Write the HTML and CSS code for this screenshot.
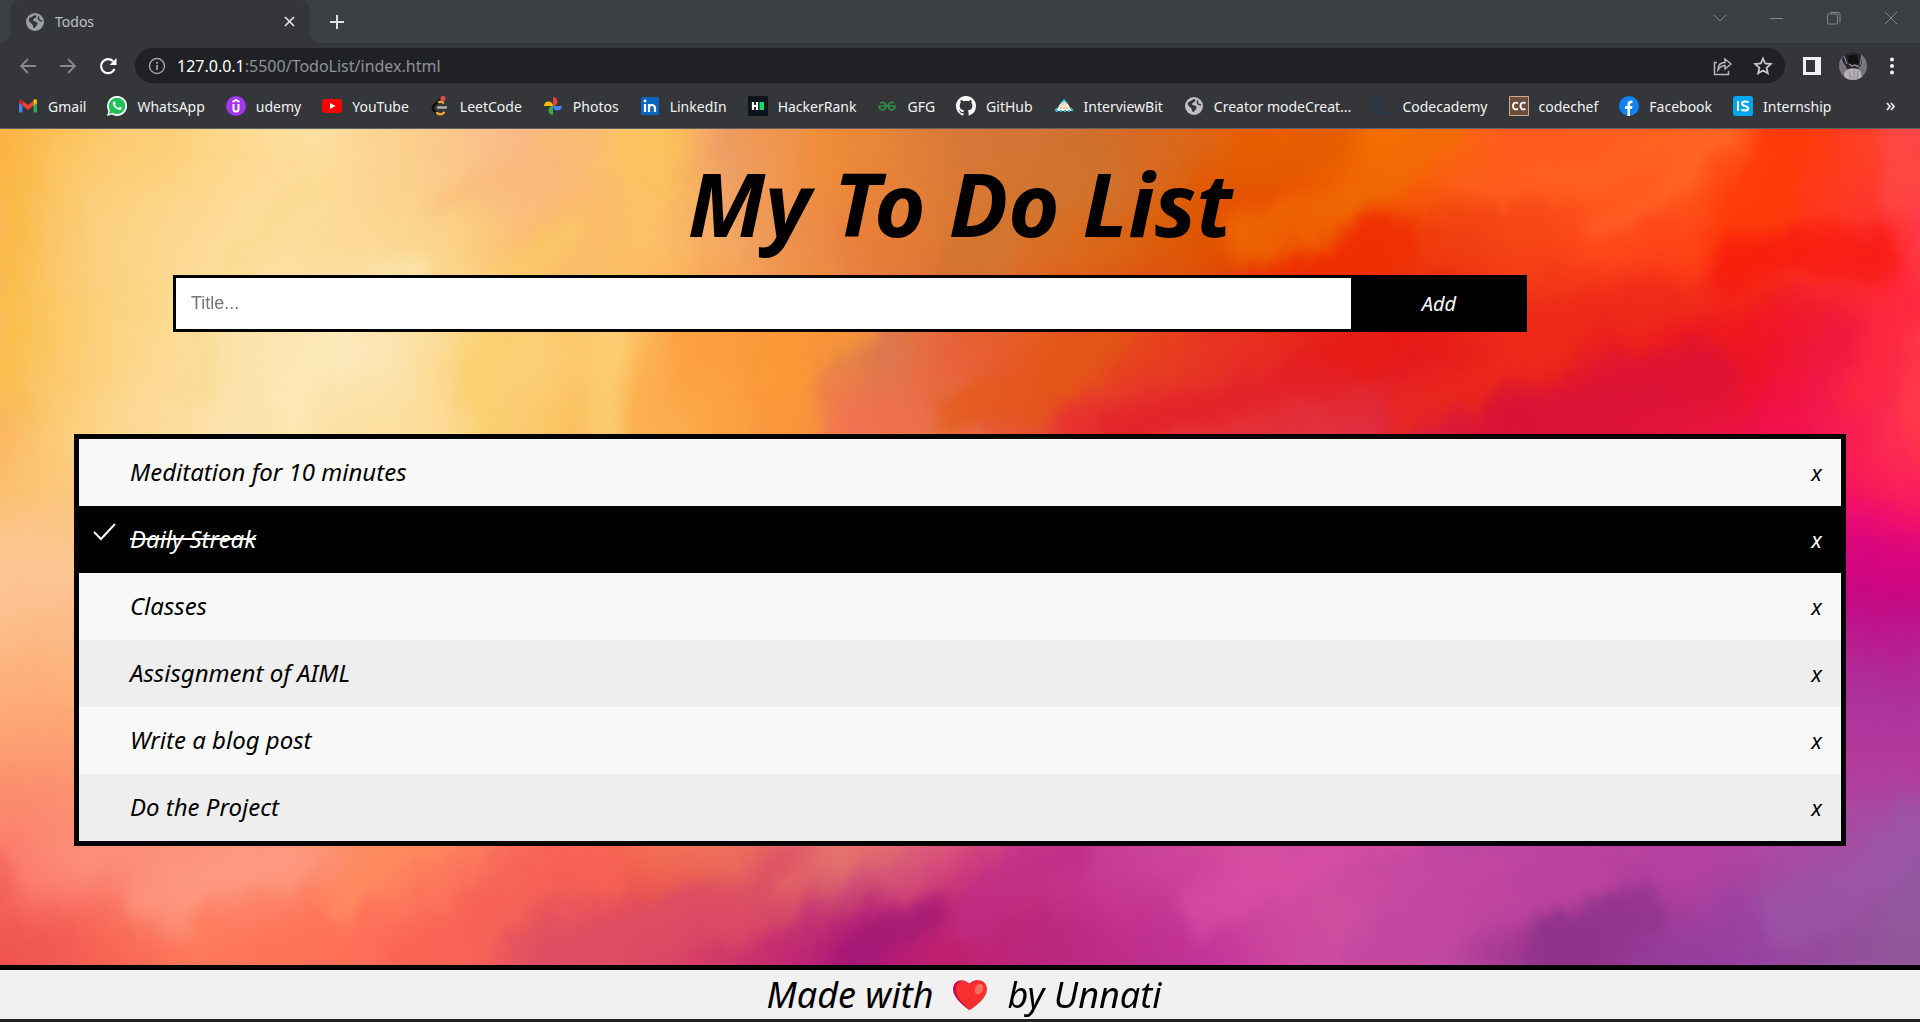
FILE: index.html
```html
<!DOCTYPE html>
<html lang="en">
<head>
<meta charset="utf-8">
<title>Todos</title>
<link rel="stylesheet" href="styles.css">
</head>
<body>
<svg class="defs" aria-hidden="true">
  <symbol id="globe" viewBox="0 0 18 18"><circle cx="9" cy="9" r="9" fill="currentColor"/><path d="M3 5.500 8 2.500c3-.8 3 1 1.500 2.200L7 6.500c-1 2 4 1.500 4.500 3.500s-1.500 3-3 5c-1.500.5-1.500-3-2.500-4S2 8.500 3 5.500Z" fill="#35363a"/><path d="M13 3.500c-1.500 2-.5 4 3 4.500" stroke="#35363a" stroke-width="1.500" fill="none"/></symbol>
</svg>
<header class="browser">
  <div class="tabstrip">
    <div class="tab">
      <svg class="favicon" aria-hidden="true"><use href="#globe"/></svg>
      <span class="tab-title">Todos</span>
      <button class="icon-btn tab-close" aria-label="Close tab"><svg width="11" height="11" viewBox="0 0 11 11"><path d="m1 1 9 9M10 1l-9 9" stroke="#dee1e6" stroke-width="1.700"/></svg></button>
    </div>
    <button class="icon-btn new-tab" aria-label="New tab"><svg width="16" height="16" viewBox="0 0 16 16"><path d="M8 1v14M1 8h14" stroke="#dee1e6" stroke-width="2"/></svg></button>
    <div class="window-controls">
      <button class="icon-btn" aria-label="Search tabs"><svg width="14" height="14" viewBox="0 0 14 14"><path d="m1 4 6 6 6-6"/></svg></button>
      <button class="icon-btn" aria-label="Minimize"><svg width="14" height="14" viewBox="0 0 14 14"><path d="M0 7.500h13"/></svg></button>
      <button class="icon-btn" aria-label="Restore"><svg width="14" height="14" viewBox="0 0 14 14"><rect x=".5" y="3" width="10" height="10" rx="1"/><path d="M3 1.500h8q2 0 2 2v8"/></svg></button>
      <button class="icon-btn" aria-label="Close"><svg width="14" height="14" viewBox="0 0 14 14"><path d="m1 1 12 12M13 1 1 13"/></svg></button>
    </div>
  </div>
  <div class="toolbar">
    <nav class="nav-buttons" aria-label="History">
      <button class="icon-btn" aria-label="Back"><svg width="20" height="20" viewBox="0 0 20 20"><path d="M18 10H3m7-7-7 7 7 7" stroke="#87898c" stroke-width="1.800" fill="none"/></svg></button>
      <button class="icon-btn" aria-label="Forward"><svg width="20" height="20" viewBox="0 0 20 20"><path d="M2 10h15m-7-7 7 7-7 7" stroke="#87898c" stroke-width="1.800" fill="none"/></svg></button>
      <button class="icon-btn" aria-label="Reload"><svg width="20" height="20" viewBox="0 0 20 20"><path d="M16.500 13A7 7 0 1 1 15 5.200" stroke="#fff" stroke-width="2.200" fill="none"/><path d="M18.500 2v7h-7z" fill="#fff"/></svg></button>
    </nav>
    <div class="omnibox">
      <svg width="18" height="18" viewBox="0 0 18 18" aria-hidden="true"><circle cx="9" cy="9" r="7.500" stroke="#9aa0a6" stroke-width="1.500" fill="none"/><path d="M9 8v5M9 5v1.800" stroke="#9aa0a6" stroke-width="1.800"/></svg>
      <span class="url" role="textbox" aria-label="Address"><span class="host">127.0.0.1</span>:5500/TodoList/index.html</span>
      <button class="icon-btn" aria-label="Share"><svg width="20" height="20" viewBox="0 0 20 20"><path d="M4 6.500H1.500v12h14V15M5 14c0-5 3-7.500 7-7.500V3l6 5-6 5V9.500c-3 0-5 1.500-7 4.500Z" stroke="#b5b7ba" stroke-width="1.500" fill="none"/></svg></button>
      <button class="icon-btn" aria-label="Bookmark this tab"><svg width="20" height="20" viewBox="0 0 20 20"><path d="m10 2.500 2.200 5 5.600.5-4.200 3.800 1.200 5.500-4.800-2.800-4.800 2.800 1.200-5.500L2.200 8l5.600-.5Z" stroke="#c6c8ca" stroke-width="1.800" fill="none"/></svg></button>
    </div>
    <div class="toolbar-end">
      <button class="icon-btn" aria-label="Side panel"><svg width="18" height="18" viewBox="0 0 18 18"><path fill="#f1f1f3" fill-rule="evenodd" d="M0 0h18v18H0zM3 3v12h9V3z"/></svg></button>
      <button class="icon-btn" aria-label="Profile"><svg width="28" height="28" viewBox="0 0 28 28"><clipPath id="av"><circle cx="14" cy="14" r="14"/></clipPath><g clip-path="url(#av)"><path fill="#77737b" d="M0 0h28v28H0z"/><path fill="#29252d" d="M4 0h18l1 14-6 4-9-1-5-6z"/><path fill="#111" d="M10 3h8l2 8-6 4-5-5z"/><path d="M2 8l5 8M5 4l3 8M23 3l-2 10M26 8l-5 8" stroke="#8a868e" stroke-width="1.200"/><path fill="#b5afb9" d="M5 21c3-5 12-7 17-1l1 8H6z"/><path d="m10 19 2 9m3-10v10m4-9-1 9" stroke="#8d8791"/><path d="m10 12 3 2 3-1 4 2" stroke="#8f8b93" stroke-width="1.500" fill="none"/></g></svg></button>
      <button class="icon-btn menu-btn" aria-label="Menu"><svg width="4" height="18" viewBox="0 0 4 18"><g fill="#f1f3f4"><circle cx="2" cy="2.500" r="2"/><circle cx="2" cy="9" r="2"/><circle cx="2" cy="15.500" r="2"/></g></svg></button>
    </div>
  </div>
  <nav class="bookmarks" aria-label="Bookmarks">
    <a href="#"><svg viewBox="0 0 20 20"><path fill="#4285f4" d="M1 6v10.500h3.500V8z"/><path fill="#34a853" d="M15.500 8v8.500H19V6z"/><path fill="#ea4335" d="m4.500 5 5.500 4 5.500-4v4.500L10 14 4.500 9.500z"/><path fill="#c5221f" d="M1 6V4.500Q2 2 4.500 4v5.500L1 7z"/><path fill="#fbbc04" d="M19 7V4.500Q18 2 15.500 4v5.500z"/></svg>Gmail</a>
    <a href="#"><svg viewBox="0 0 20 20"><path fill="#fff" d="M10 0a10 10 0 1 1-5 18.600L0 20l1.400-5A10 10 0 0 1 10 0Z"/><circle cx="10" cy="10" r="8.300" fill="#1fc157"/><path fill="#1fc157" d="m2 18 1.300-4.500 3.200 3z"/><path d="M6.500 5.500Q5 7 6.500 9.500c1.800 3 4.500 4.600 6.500 4.500q2-.5 1.800-2.200l-2.300-1-1 1.200Q9 11 8 8.800l.8-1L8 5.500z" fill="#fff"/></svg>WhatsApp</a>
    <a href="#"><svg viewBox="0 0 20 20"><circle cx="10" cy="10" r="10" fill="#a435f0"/><path d="m6.500 6 3.500-2 3.500 2M7.500 8v5q0 2.500 2.500 2.500t2.500-2.500V8" fill="none" stroke="#fff" stroke-width="2"/></svg>udemy</a>
    <a href="#"><svg viewBox="0 0 20 20"><rect y="3" width="20" height="14" rx="3.500" fill="#f00"/><path fill="#fff" d="m8 7 5.500 3L8 13z"/></svg>YouTube</a>
    <a href="#"><svg viewBox="0 0 20 20" fill="none" stroke-linecap="round" stroke-width="2.300"><path stroke="#0b0b0b" d="M11 3 3.500 10q-1.500 2 0 4L6 16.500"/><path stroke="#f5a623" d="m9 6q2-1 4 .7M7 17q4 3 7-.5"/><path stroke="#b3b1b0" d="M8 11.500h8"/><circle cx="13" cy="2.500" r="1.500" fill="#d34c4c" stroke="#d34c4c"/></svg>LeetCode</a>
    <a href="#"><svg viewBox="0 0 20 20"><path fill="#ea4335" d="M10 1a4.500 4.500 0 0 1 0 9z"/><path fill="#4285f4" d="M19 10a4.500 4.500 0 0 1-9 0z"/><path fill="#34a853" d="M10 19a4.500 4.500 0 0 1 0-9z"/><path fill="#fbbc04" d="M1 10a4.500 4.500 0 0 1 9 0z"/></svg>Photos</a>
    <a href="#"><svg viewBox="0 0 20 20"><rect x="1" y="1" width="18" height="18" rx="1.500" fill="#0a66c2"/><circle cx="5" cy="5" r="1.400" fill="#fff"/><path d="M5 8v8M9 16V8m0 4q0-3 2.800-3T15 12v4" fill="none" stroke="#fff" stroke-width="2.200"/></svg>LinkedIn</a>
    <a href="#"><svg viewBox="0 0 20 20"><path fill="#0e141e" d="M0 0h20v20H0z"/><path stroke="#fff" stroke-width="2.200" d="M5 6v8M9 6v8M5 10h4"/><path fill="#05e55e" d="M11.500 6H16v8h-4.500z"/></svg>HackerRank</a>
    <a href="#"><svg viewBox="0 0 20 20"><path d="M3 7q5-2 6 3-1 5-5 3.500Q2 12.500 2 10h16q0 2.500-2 3.500-4 1.500-5-3.500 1-5 6-3" fill="none" stroke="#2f8d46" stroke-width="1.700"/></svg>GFG</a>
    <a href="#"><svg viewBox="0 0 16 16"><path fill="#fff" d="M8 0C3.580 0 0 3.580 0 8c0 3.540 2.290 6.530 5.470 7.590.4.070.55-.17.55-.38v-1.490c-2.010.37-2.530-.49-2.690-.94-.09-.23-.48-.94-.82-1.130-.28-.15-.68-.52-.01-.53.63-.01 1.080.58 1.230.82.72 1.210 1.870.87 2.330.66.07-.52.28-.87.51-1.070-1.780-.2-3.640-.89-3.640-3.950 0-.87.31-1.590.82-2.150-.08-.2-.36-1.020.08-2.120 0 0 .67-.21 2.200.82a7.600 7.600 0 0 1 4 0c1.530-1.040 2.200-.82 2.200-.82.44 1.100.16 1.920.08 2.120.51.56.82 1.270.82 2.150 0 3.070-1.870 3.750-3.650 3.950.29.25.54.73.54 1.480v2.200c0 .21.150.46.550.38A8 8 0 0 0 16 8c0-4.420-3.580-8-8-8Z"/></svg>GitHub</a>
    <a href="#"><svg viewBox="0 0 20 20"><path fill="#f6eee2" d="m10 4 4 4 4 7H2l4-7z"/><path d="m7 7 3-3 3 3M1 15l2-3M19 15l-2-3" fill="none" stroke="#30b7d0" stroke-width="1.500"/><path d="M2 15h16" stroke="#30b7d0" stroke-width="2" stroke-dasharray="2 2"/><path d="M6 12h8M8 8h4" stroke="#e9a348" stroke-dasharray="2 1"/></svg>InterviewBit</a>
    <a href="#"><svg class="grey" viewBox="-1 -1 20 20"><use href="#globe" width="18" height="18"/></svg>Creator modeCreat...</a>
    <a href="#"><svg viewBox="0 0 20 20"><path d="M.5 2.500h11v15H.5zM8 7.500q-3-1-3 2.500t3 2.500M15 17.500h5" fill="none" stroke="#173f5c"/></svg>Codecademy</a>
    <a href="#"><svg viewBox="0 0 20 20"><path fill="#6c4d3c" stroke="#c8ac94" d="M.5.500h19v19H.5z"/><path d="M9 7Q4 5.500 4 10t5 3M16.500 7q-5-1.500-5 3t5 3" fill="none" stroke="#fff" stroke-width="2"/></svg>codechef</a>
    <a href="#"><svg viewBox="0 0 20 20"><circle cx="10" cy="10" r="10" fill="#0e83f5"/><path fill="#fff" d="M8.500 20v-7H6v-3h2.500V8q0-4 5-3.500V7q-2.500-.3-2.500 1.500V10h2.500l-.5 3h-2v7z"/></svg>Facebook</a>
    <a href="#"><svg viewBox="0 0 20 20"><rect width="20" height="20" rx="2.500" fill="#00a5ec"/><path d="M5 5v10M15.500 6.500Q14 5.500 12 5.500q-3 0-3 2t3 2.500 3.300 2.500q-.3 2-3.300 2t-3.500-1" stroke="#fff" stroke-width="2" fill="none"/></svg>Internship</a>
    <button class="icon-btn more" aria-label="More bookmarks"><svg width="10" height="9" viewBox="0 0 10 9"><path d="m1 1 3 3.500L1 8m4-7 3 3.500L5 8" fill="none" stroke="#e8eaed" stroke-width="1.800"/></svg></button>
  </nav>
</header>

<main class="page">
  <svg class="painting" viewBox="0 0 1920 836" preserveAspectRatio="none" aria-hidden="true">
    <defs>
      <filter id="blend" filterUnits="userSpaceOnUse" x="-300" y="-300" width="2520" height="1436" color-interpolation-filters="sRGB"><feGaussianBlur stdDeviation="6 28"/></filter>
      <filter id="soft" filterUnits="userSpaceOnUse" x="-200" y="-200" width="2320" height="1236" color-interpolation-filters="sRGB"><feGaussianBlur stdDeviation="9"/></filter>
      <filter id="paint" filterUnits="userSpaceOnUse" x="-100" y="-100" width="2120" height="1036" color-interpolation-filters="sRGB"><feTurbulence type="fractalNoise" baseFrequency=".014 .009" numOctaves="5" seed="8" result="n"/><feDisplacementMap in="SourceGraphic" in2="n" scale="50" xChannelSelector="R" yChannelSelector="G"/></filter>
      <linearGradient id="a"><stop offset="0" stop-color="#fbb23c"/><stop offset=".05" stop-color="#fcc96a"/><stop offset=".16" stop-color="#fde0a0"/><stop offset=".21" stop-color="#fbd08c"/><stop offset=".27" stop-color="#fbb88a"/><stop offset=".34" stop-color="#fdc25c"/><stop offset=".38" stop-color="#ee9e64"/><stop offset=".43" stop-color="#f08c38"/><stop offset=".5" stop-color="#d87838"/><stop offset=".57" stop-color="#d07030"/><stop offset=".66" stop-color="#e85c00"/><stop offset=".73" stop-color="#f87000"/><stop offset=".79" stop-color="#ff5a20"/><stop offset=".88" stop-color="#ff6020"/><stop offset=".93" stop-color="#ff3808"/><stop offset="1" stop-color="#ff4440"/></linearGradient>
      <linearGradient id="b"><stop offset="0" stop-color="#fbb848"/><stop offset=".05" stop-color="#fbd080"/><stop offset=".13" stop-color="#fde0a0"/><stop offset=".22" stop-color="#fbd68c"/><stop offset=".29" stop-color="#fbb868"/><stop offset=".34" stop-color="#fdc068"/><stop offset=".39" stop-color="#f0a060"/><stop offset=".45" stop-color="#e87c38"/><stop offset=".52" stop-color="#d87830"/><stop offset=".62" stop-color="#dc5800"/><stop offset=".68" stop-color="#f03000"/><stop offset=".76" stop-color="#f04010"/><stop offset=".84" stop-color="#ff4a18"/><stop offset=".92" stop-color="#ff3a10"/><stop offset="1" stop-color="#ff3038"/></linearGradient>
      <linearGradient id="c"><stop offset="0" stop-color="#fbc050"/><stop offset=".1" stop-color="#fce0a0"/><stop offset=".18" stop-color="#fde8c0"/><stop offset=".25" stop-color="#fbd888"/><stop offset=".31" stop-color="#fcc868"/><stop offset=".36" stop-color="#fda040"/><stop offset=".4" stop-color="#fa9838"/><stop offset=".45" stop-color="#e08048"/><stop offset=".5" stop-color="#e86038"/><stop offset=".55" stop-color="#e45818"/><stop offset=".64" stop-color="#e83020"/><stop offset=".73" stop-color="#e81818"/><stop offset=".79" stop-color="#ec2818"/><stop offset=".91" stop-color="#ee1420"/><stop offset=".96" stop-color="#f01840"/><stop offset="1" stop-color="#ff3048"/></linearGradient>
      <linearGradient id="d"><stop offset="0" stop-color="#fbb860"/><stop offset=".04" stop-color="#fcd080"/><stop offset=".12" stop-color="#fde4b0"/><stop offset=".21" stop-color="#fce0a0"/><stop offset=".28" stop-color="#fbc868"/><stop offset=".38" stop-color="#fba040"/><stop offset=".44" stop-color="#f07050"/><stop offset=".5" stop-color="#e87048"/><stop offset=".56" stop-color="#e83030"/><stop offset=".7" stop-color="#e03040"/><stop offset=".78" stop-color="#d81038"/><stop offset=".86" stop-color="#e01438"/><stop offset=".93" stop-color="#f01050"/><stop offset="1" stop-color="#ff3050"/></linearGradient>
      <linearGradient id="e"><stop offset="0" stop-color="#fb7868"/><stop offset=".05" stop-color="#fd9080"/><stop offset=".13" stop-color="#fd9880"/><stop offset=".2" stop-color="#fd8a60"/><stop offset=".29" stop-color="#f86058"/><stop offset=".34" stop-color="#f06048"/><stop offset=".44" stop-color="#e07070"/><stop offset=".5" stop-color="#d04080"/><stop offset=".57" stop-color="#c83890"/><stop offset=".65" stop-color="#d850a0"/><stop offset=".73" stop-color="#c848a0"/><stop offset=".88" stop-color="#b840a0"/><stop offset="1" stop-color="#9858a8"/></linearGradient>
      <linearGradient id="f"><stop offset="0" stop-color="#ee5050"/><stop offset=".1" stop-color="#ff7858"/><stop offset=".23" stop-color="#fd6858"/><stop offset=".29" stop-color="#e05060"/><stop offset=".36" stop-color="#d84068"/><stop offset=".44" stop-color="#b01878"/><stop offset=".5" stop-color="#c02070"/><stop offset=".55" stop-color="#b82880"/><stop offset=".63" stop-color="#c43498"/><stop offset=".69" stop-color="#d050a0"/><stop offset=".76" stop-color="#c048a0"/><stop offset=".81" stop-color="#903088"/><stop offset=".9" stop-color="#9840a0"/><stop offset="1" stop-color="#905898"/></linearGradient>
      <linearGradient id="left" x2="0" y2="1"><stop offset="0" stop-color="#fbc070"/><stop offset=".25" stop-color="#fbc898"/><stop offset=".6" stop-color="#fdb078"/><stop offset="1" stop-color="#fc8068"/></linearGradient>
      <linearGradient id="right" x2="0" y2="1"><stop offset="0" stop-color="#ff1060"/><stop offset=".15" stop-color="#e80878"/><stop offset=".3" stop-color="#c40082"/><stop offset=".45" stop-color="#b82090"/><stop offset=".65" stop-color="#a838a0"/><stop offset=".8" stop-color="#b83898"/><stop offset="1" stop-color="#a050a8"/></linearGradient>
    </defs>
    <g filter="url(#paint)">
      <g filter="url(#blend)">
        <path fill="url(#a)" d="M0-200h1920V70H0z"/>
        <rect x="-200" width="200" y="-200" height="1236" fill="#fbb860"/><rect x="1920" width="200" y="-200" height="1236" fill="#ff3848"/>
        <rect y="70" width="1920" height="90" fill="url(#b)"/>
        <rect y="160" width="1920" height="100" fill="url(#c)"/>
        <rect x="-200" y="350" width="1200" height="360" fill="url(#left)"/>
        <rect x="1000" y="350" width="1120" height="360" fill="url(#right)"/>
        <rect y="260" width="1920" height="100" fill="url(#d)"/>
        <rect y="690" width="1920" height="80" fill="url(#e)"/>
        <rect y="770" width="1920" height="266" fill="url(#f)"/>
        <path fill="#f06058" d="M-200 700H0v336h-200z"/><path fill="#9058a0" d="M1920 700h200v336h-200z"/>
      </g>
      <g filter="url(#soft)" fill="none" stroke-linecap="round">
        <path d="M30 20q-30 120-10 260" stroke="#fabb48" stroke-width="26" opacity=".5"/>
        <path d="M190 250Q220 110 330 40" stroke="#fbd98c" stroke-width="40" opacity=".5"/>
        <path d="M300 320Q300 200 400 140" stroke="#fdeab8" stroke-width="38" opacity=".6"/>
        <path d="M480 320Q490 170 560 110" stroke="#fbcd66" stroke-width="40" opacity=".6"/>
        <path d="M610 300V180" stroke="#fbd47c" stroke-width="44" opacity=".6"/>
        <path d="M450 70 570 10" stroke="#fab872" stroke-width="36" opacity=".5"/>
        <path d="M780 300Q770 210 850 190" stroke="#fe9a34" stroke-width="60" opacity=".7"/>
        <path d="M885 250V210" stroke="#dd7550" stroke-width="32" opacity=".8"/>
        <path d="M960 170Q1000 60 1100 40" stroke="#cf752e" stroke-width="50" opacity=".6"/>
        <path d="M960 290Q1080 260 1130 180" stroke="#e35914" stroke-width="44" opacity=".7"/>
        <path d="M1240 110Q1330 90 1450 0" stroke="#ee6c04" stroke-width="44" opacity=".8"/>
        <path d="M1200 60Q1280 50 1340 0" stroke="#df5a00" stroke-width="36" opacity=".7"/>
        <path d="M1270 160q60 0 120-50" stroke="#ef2d00" stroke-width="60" opacity=".8"/>
        <path d="M1480 60Q1600 50 1720-10" stroke="#ff6220" stroke-width="40" opacity=".7"/>
        <path d="M1740 110 1800-10" stroke="#ff3a08" stroke-width="70" opacity=".8"/>
        <path d="M1720-10Q1700 60 1600 90" stroke="#ff7030" stroke-width="20" opacity=".5"/>
        <path d="M1300 250Q1380 240 1440 170" stroke="#e71914" stroke-width="40" opacity=".7"/>
        <path d="M1400 280Q1550 200 1730 160" stroke="#ee2c17" stroke-width="40" opacity=".6"/>
        <path d="M1730 140Q1780 110 1880 130" stroke="#f5170e" stroke-width="46" opacity=".7"/>
        <path d="M1120 300Q1230 250 1320 260" stroke="#e32026" stroke-width="40" opacity=".7"/>
        <path d="M1500 310Q1620 270 1700 240" stroke="#da1138" stroke-width="60" opacity=".7"/>
        <path d="M1860 270 1910 150" stroke="#ff2740" stroke-width="36" opacity=".8"/>
        <path d="M1910 70V-10" stroke="#ff4844" stroke-width="50" opacity=".8"/>
        <path d="M150 770q60-30 140-40" stroke="#ff9c86" stroke-width="46" opacity=".6"/>
        <path d="M330 780Q380 720 460 710" stroke="#ff8b5c" stroke-width="40" opacity=".7"/>
        <path d="M420 840Q490 760 600 730" stroke="#f66254" stroke-width="60" opacity=".7"/>
        <path d="M570 840Q700 790 790 750" stroke="#dc4d64" stroke-width="60" opacity=".7"/>
        <path d="M790 760Q840 740 870 710" stroke="#e87068" stroke-width="30" opacity=".6"/>
        <path d="M850 830Q890 790 930 790" stroke="#a01875" stroke-width="46" opacity=".7"/>
        <path d="M980 790Q1000 740 1080 720" stroke="#be2c86" stroke-width="50" opacity=".7"/>
        <path d="M1200 780Q1300 740 1400 710" stroke="#d94ea4" stroke-width="40" opacity=".7"/>
        <path d="M1340 830Q1460 780 1590 760" stroke="#c246a0" stroke-width="40" opacity=".7"/>
        <path d="M1550 840Q1570 790 1660 780" stroke="#8f338c" stroke-width="44" opacity=".7"/>
        <path d="M1780 790Q1860 760 1910 700" stroke="#9a55a8" stroke-width="60" opacity=".7"/>
      </g>
    </g>
  </svg>

  <h1>My To Do List</h1>
  <form class="add-form">
    <input type="text" placeholder="Title..." aria-label="Title">
    <button type="button">Add</button>
  </form>
  <ul class="todos">
    <li><span>Meditation for 10 minutes</span><button aria-label="Remove Meditation for 10 minutes">x</button></li>
    <li class="done"><svg class="tick" width="24" height="18" viewBox="0 0 24 18" aria-hidden="true"><path d="m1 9 7 7L22 1" fill="none" stroke="#fff" stroke-width="2"/></svg><span>Daily Streak</span><button aria-label="Remove Daily Streak">x</button></li>
    <li><span>Classes</span><button aria-label="Remove Classes">x</button></li>
    <li><span>Assisgnment of AIML</span><button aria-label="Remove Assisgnment of AIML">x</button></li>
    <li><span>Write a blog post</span><button aria-label="Remove Write a blog post">x</button></li>
    <li><span>Do the Project</span><button aria-label="Remove Do the Project">x</button></li>
  </ul>
</main>
<footer class="credit">
  <span>Made with</span>
  <svg width="34" height="30" viewBox="0 0 34 30" role="img" aria-label="love"><path fill="#ca0b4a" d="M16 30C8 24 0 17 0 9 0 0 11-3 16 4c6-7 17-4 17 5 0 8-8 15-17 21Z"/><path fill="#f92f2f" d="M17 30C10 24 3 17 3 9c0-9 9-10 14-5 6-7 17-4 17 5 0 8-8 15-17 21Z"/><ellipse cx="26" cy="9" rx="4" ry="5.500" fill="#fa6e64" transform="rotate(25 26 9)"/></svg>
  <span>by Unnati</span>
</footer>
</body>
</html>
```
FILE: styles.css
```css
* {
  box-sizing: border-box;
}

body {
  margin: 0;
  min-height: 100vh;
  display: flex;
  flex-direction: column;
  font-family: "Noto Sans", "Open Sans", sans-serif;
  background: #202124;
}

button {
  font-family: inherit;
  border: 0;
  cursor: pointer;
}

.defs {
  position: absolute;
  width: 0;
  height: 0;
}

/* Browser frame */

.browser {
  background: #35363a;
  border-bottom: 1px solid #5f6368;
  color: #f1f3f4;
}

.icon-btn {
  display: flex;
  padding: 0;
  background: none;
}

.tabstrip {
  display: flex;
  align-items: center;
  height: 43px;
  padding-left: 10px;
  background: #3c4043;
}

.tab {
  position: relative;
  display: flex;
  align-items: center;
  width: 300px;
  height: 43px;
  padding: 0 15px 0 16px;
  border-radius: 10px 10px 0 0;
  background: #35363a;
}

.tab::before,
.tab::after {
  content: "";
  position: absolute;
  bottom: 0;
  width: 10px;
  height: 10px;
}

.tab::before {
  left: -10px;
  background: radial-gradient(circle at 0 0, transparent 10px, #35363a 10px);
}

.tab::after {
  right: -10px;
  background: radial-gradient(circle at 100% 0, transparent 10px, #35363a 10px);
}

.favicon {
  width: 18px;
  height: 18px;
  color: #9aa0a6;
}

.tab-title {
  flex: 1;
  margin-left: 11px;
  font-size: 14px;
  color: #bdc1c6;
}

.new-tab {
  margin-left: 19px;
}

.window-controls {
  display: flex;
  gap: 43px;
  height: 36px;
  align-items: center;
  align-self: flex-start;
  margin-left: auto;
  padding-right: 22px;
}

.window-controls path,
.window-controls rect {
  fill: none;
  stroke: #85888b;
}

.toolbar {
  display: flex;
  align-items: center;
  height: 45px;
  padding: 0 26px 0 18px;
}

.nav-buttons {
  display: flex;
  gap: 20px;
}

.omnibox {
  flex: 1;
  display: flex;
  align-items: center;
  height: 35px;
  margin: 0 18px 0 17px;
  padding: 0 12px 0 13px;
  border-radius: 18px;
  background: #202124;
}

.omnibox button {
  margin-left: 20px;
}

.url {
  flex: 1;
  margin-left: 11px;
  font-size: 16px;
  color: #909398;
}

.host {
  color: #fff;
}

.toolbar-end {
  display: flex;
  align-items: center;
  gap: 18px;
}

.menu-btn {
  margin-left: 5px;
}

.bookmarks {
  display: flex;
  align-items: center;
  gap: 21px;
  height: 40px;
  padding: 0 24px 4px 18px;
}

.bookmarks a {
  display: flex;
  align-items: center;
  gap: 10px;
  font-size: 14px;
  white-space: nowrap;
  color: #f1f3f4;
  text-decoration: none;
}

.bookmarks a svg {
  width: 20px;
  height: 20px;
}

.bookmarks .grey {
  color: #bdc1c6;
}

.more {
  margin-left: auto;
}

/* To-do page */

.page {
  position: relative;
  flex: 1;
  overflow: hidden;
}

.painting {
  position: absolute;
  inset: 0;
  z-index: -1;
  width: 100%;
  height: 100%;
}

h1 {
  margin: 0;
  padding-top: 24px;
  text-align: center;
  font-size: 88px;
  font-style: italic;
  font-weight: 700;
  line-height: 100px;
}

.add-form {
  display: flex;
  height: 57px;
  margin: 22px 393px 0 173px;
}

.add-form input {
  flex: 1;
  padding: 0 15px;
  border: 3px solid #000;
  border-right: 0;
  font-family: "Liberation Sans", Arial, sans-serif;
  font-size: 18px;
}

.add-form input::placeholder {
  color: #757575;
}

.add-form button {
  width: 176px;
  background: #000;
  color: #fff;
  font-size: 20px;
  font-style: italic;
}

.todos {
  margin: 102px 74px 119px;
  padding: 0;
  border: 5px solid #000;
  list-style: none;
  font-size: 24px;
  font-style: italic;
}

.todos li {
  position: relative;
  display: flex;
  align-items: center;
  justify-content: space-between;
  height: 67px;
  padding: 0 7px 2px 51px;
  background: #f9f9f9;
}

.todos li:nth-child(even) {
  background: #eee;
}

.todos li.done {
  background: #000;
  color: #fff;
}

.done span {
  text-decoration: line-through;
}

.tick {
  position: absolute;
  left: 14px;
  top: 17px;
}

.todos button {
  padding: 12px;
  background: none;
  color: inherit;
  font-size: 22px;
  font-style: italic;
  line-height: 24px;
}

.credit {
  display: flex;
  justify-content: center;
  align-items: center;
  gap: 20px;
  height: 57px;
  padding-left: 8px;
  border-top: 5px solid #000;
  border-bottom: 3px solid #202124;
  background: #f1f1f1;
  font-size: 36px;
  font-style: italic;
  line-height: 48px;
}
```
